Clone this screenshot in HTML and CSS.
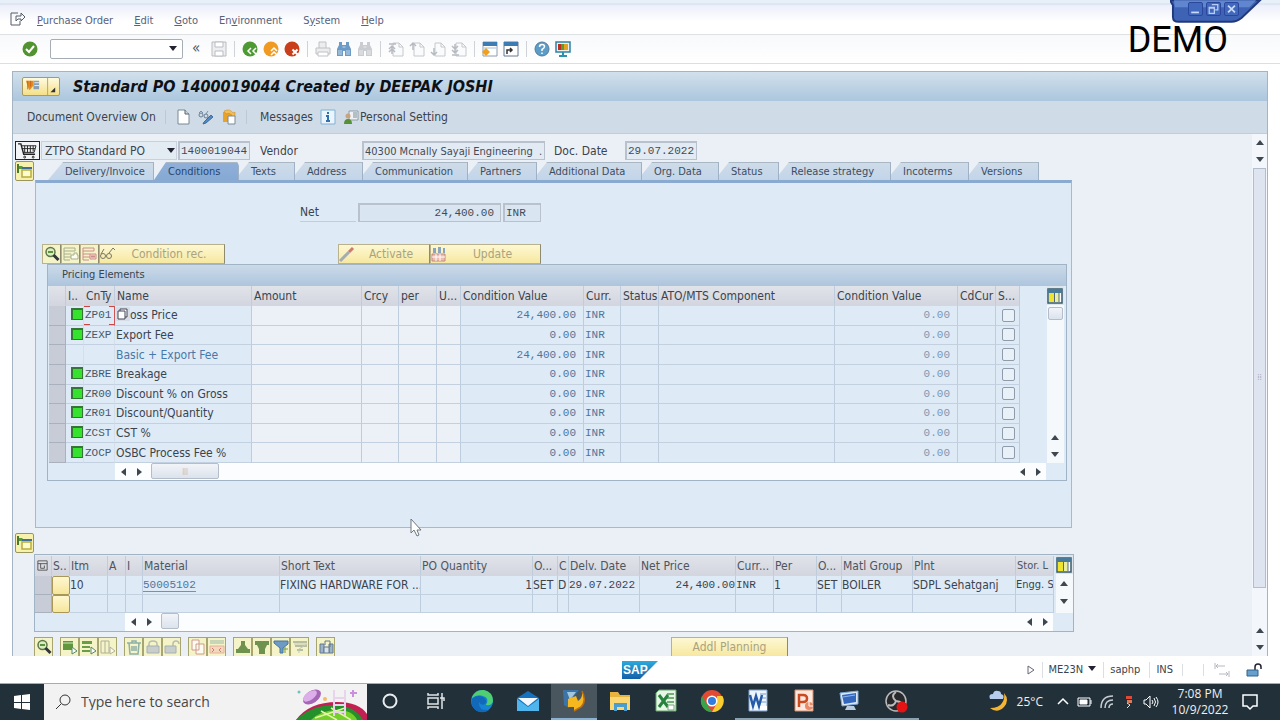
FILE: index.html
```html
<!DOCTYPE html>
<html lang="en">
<head>
<meta charset="utf-8">
<meta name="viewport" content="width=device-width, initial-scale=1">
<title>Standard PO 1400019044</title>
<link rel="stylesheet" href="styles.css">
</head>
<body>
<svg class="sprite" aria-hidden="true">
  <symbol id="binoc" viewBox="0 0 16 16"><path d="M3 1h3v3h4V1h3v3l2 4v7H9v-5H7v5H1V8l2-4z"/><path d="M3 9v5M5 9v5M11 9v5M13 9v5M6.500 6h3" stroke="#fff" stroke-opacity=".6" fill="none"/></symbol>
  <symbol id="page" viewBox="0 0 16 16"><path d="M5 2h6l4 4v9H5z" fill="#fafbfc" stroke="#c6c8cc"/><path d="M11 2v4h4" fill="none" stroke="#c6c8cc"/></symbol>
  <symbol id="tree" viewBox="0 0 16 16"><path d="M1 1v9" stroke="#4b7a2b" stroke-width="2"/><path d="M2 3h3l3 3H2z" fill="#5c9a36"/><path d="M5 5h10" stroke="#3d6f9c" stroke-width="2"/><path d="M5 7h9v7H5z" fill="#fffbd0" stroke="#b8ad3c" stroke-width="1.500"/></symbol>
  <symbol id="lens" viewBox="0 0 16 16"><circle cx="6.500" cy="6" r="4.500" fill="#d9edc0" stroke="#5f7646" stroke-width="1.500"/><path d="M4 6h5" stroke="#5d923e" stroke-width="2"/><path d="M9.500 9l5 5" stroke="#30363b" stroke-width="3"/></symbol>
  <symbol id="grid" viewBox="0 0 16 16"><path d="M1 1h14v14H1z" fill="#fff" stroke="#375b68" stroke-width="1.500"/><path d="M1 1h14v4H1z" fill="#477b99"/><path d="M2 5h5v9H2z" fill="#f0e52e"/><path d="M8 5h4v9H8z" fill="#e8efa0"/><path d="M7.500 5v9M12 5v9" stroke="#567"/></symbol>
  <symbol id="lock" viewBox="0 0 16 16"><path d="M4 7V5q0-3 4-3t4 3v2" fill="none" stroke="#a6ada9" stroke-width="1.500"/><path d="M2 7h12v7H2z" fill="#b9c2cc" stroke="#8f9ba7"/></symbol>
</svg>

<div class="session">
  <svg class="session-shape" viewBox="0 0 94 26" aria-hidden="true"><path d="M0 0h92L73 18q-5 4-10 4H9q-6 0-6-5V5z" fill="#3f63b4" stroke="#22387d" stroke-width="2"/><path d="M4 0h84l-7 7H5z" fill="#5f86cf"/></svg>
  <button aria-label="Minimize"><svg viewBox="0 0 14 14"><path d="M2 11h9" stroke="#c9dbfa" stroke-width="2"/></svg></button>
  <button aria-label="Restore"><svg viewBox="0 0 14 14"><path d="M5 2h7v6H9M2 5h6v7H2zM2 6h6" fill="none" stroke="#b7cdf5" stroke-width="1.500"/></svg></button>
  <button aria-label="Close"><svg viewBox="0 0 14 14"><path d="M3 3l8 8M11 3l-8 8" stroke="#c9dbfa" stroke-width="2"/></svg></button>
</div>
<div class="demo">DEMO</div>

<nav class="menu">
  <svg class="i16" viewBox="0 0 16 16" fill="none" stroke="#555c68"><path d="M8 2H1v12h9v-4"/><path d="M6 10V5h5V2l4 4-4 4V8H8z"/></svg>
  <a href="#"><u>P</u>urchase Order</a><a href="#"><u>E</u>dit</a><a href="#"><u>G</u>oto</a><a href="#">En<u>v</u>ironment</a><a href="#">S<u>y</u>stem</a><a href="#"><u>H</u>elp</a>
</nav>

<div class="tools">
  <button class="i16" aria-label="Enter"><svg viewBox="0 0 16 16"><circle cx="8" cy="8" r="7.500" fill="#51942f"/><path d="M4 8l3 3 5-6" fill="none" stroke="#fff" stroke-width="2"/></svg></button>
  <span class="drop command"><input type="text" aria-label="Command"></span>
  <span class="back">«</span>
  <div class="group"><button class="i16" aria-label="Save"><svg viewBox="0 0 16 16" fill="#eceef0" stroke="#b9bcc2"><path d="M1 1h14v14H1z"/><path d="M4 1h8v5H4zM4 10h8v5H4z" fill="#fff"/></svg></button></div>
  <div class="group">
    <button class="i16" aria-label="Back"><svg viewBox="0 0 16 16"><circle cx="8" cy="8" r="7.500" fill="#4d9a33"/><path d="M9 7l-3 3 3 3M14 7l-3 3 3 3" fill="none" stroke="#fff" stroke-width="1.500"/></svg></button>
    <button class="i16" aria-label="Exit"><svg viewBox="0 0 16 16"><circle cx="8" cy="8" r="7.500" fill="#f09a22"/><path d="M8 10l3-3 3 3M8 14l3-3 3 3" fill="none" stroke="#fff" stroke-width="1.500"/></svg></button>
    <button class="i16" aria-label="Cancel"><svg viewBox="0 0 16 16"><circle cx="8" cy="8" r="7.500" fill="#c93f1c"/><path d="M8.500 8.500l5 5M13.500 8.500l-5 5" stroke="#fff" stroke-width="2"/></svg></button>
  </div>
  <div class="group">
    <button class="i16" aria-label="Print"><svg viewBox="0 0 16 16" fill="#eceded" stroke="#bfc1c6"><path d="M4 7V1h7v6"/><path d="M1 7h14v6H1z"/><path d="M3 11h10v4H3z" fill="#fff"/></svg></button>
    <button class="i16 find" aria-label="Find"><svg><use href="#binoc"/></svg></button>
    <button class="i16 findnext" aria-label="Find next"><svg><use href="#binoc"/></svg></button>
  </div>
  <div class="group">
    <button class="i16" aria-label="First page"><svg viewBox="0 0 16 16"><use href="#page"/><path d="M1 3h7M4 13V5M1 8l3-3 3 3M1 11l3-3 3 3" fill="none" stroke="#b7bac0" stroke-width="1.500"/></svg></button>
    <button class="i16" aria-label="Previous page"><svg viewBox="0 0 16 16"><use href="#page"/><path d="M4 9V2M1 5l3-3 3 3" fill="none" stroke="#b7bac0" stroke-width="1.500"/></svg></button>
    <button class="i16" aria-label="Next page"><svg viewBox="0 0 16 16"><use href="#page"/><path d="M4 7v7M1 11l3 3 3-3" fill="none" stroke="#b7bac0" stroke-width="1.500"/></svg></button>
    <button class="i16" aria-label="Last page"><svg viewBox="0 0 16 16"><use href="#page"/><path d="M1 14h7M4 3v9M1 5l3 3 3-3M1 9l3 3 3-3" fill="none" stroke="#b7bac0" stroke-width="1.500"/></svg></button>
  </div>
  <div class="group">
    <button class="i16" aria-label="New session"><svg viewBox="0 0 16 16"><path d="M1 1h14v14H1z" fill="#fff" stroke="#8c9db0"/><path d="M1 1h14v4H1z" fill="#3d7bb5"/><path d="M2 7h12" stroke="#9dc0df"/><path d="M4 7l4 4-4 4-4-4z" fill="#f0a01c"/></svg></button>
    <button class="i16" aria-label="Shortcut"><svg viewBox="0 0 16 16"><path d="M1 1h14v14H1z" fill="#fff" stroke="#627c96"/><path d="M1 1h14v4H1z" fill="#3d7bb5"/><path d="M4 13V9h5M7 7l2 2-2 2" fill="none" stroke="#333" stroke-width="1.500"/></svg></button>
  </div>
  <div class="group">
    <button class="i16" aria-label="Help"><svg viewBox="0 0 16 16"><circle cx="8" cy="8" r="7" fill="#5b9cc9" stroke="#547b99"/><path d="M5.500 6q0-2.500 2.500-2.500t2.500 2q0 1.500-2.500 3V10M8 11.500v1.500" fill="none" stroke="#fff" stroke-width="1.500"/></svg></button>
    <button class="i16" aria-label="Layout"><svg viewBox="0 0 16 16"><path d="M1 1h14v10H1z" fill="#eee" stroke="#2d83a5" stroke-width="1.500"/><path d="M3 3h3v6H3z" fill="#be2d20"/><path d="M6 3h3v6H6z" fill="#5d9b2c"/><path d="M9 3h4v6H9z" fill="#e3a521"/><path d="M8 11v3M4 15h8" stroke="#2c91ad" stroke-width="2"/></svg></button>
  </div>
</div>

<main class="frame">
  <header class="titlebar">
    <button class="objbtn" aria-label="Services for object"><svg viewBox="0 0 38 18"><path d="M26 0v18" stroke="#b3a55c"/><path d="M3 3h8v5l-4 5-2-4z" fill="#e58b1e"/><path d="M5 3v9M8 3v6" stroke="#c6651a"/><path d="M11 3h6v9h-6z" fill="#87a0b4"/><path d="M12 5h5M12 8h5" stroke="#e9f1f8"/><path d="M34 10v5h-5z" fill="#333"/></svg></button>
    <h1>Standard PO 1400019044 Created by DEEPAK JOSHI</h1>
  </header>
  <div class="appbar">
    <button>Document Overview On</button><i class="bar"></i>
    <button class="i16" aria-label="Create"><svg viewBox="0 0 16 16"><path d="M3 1h7l4 4v10H3z" fill="#fff" stroke="#7b8794"/><path d="M10 1v4h4" fill="#cdd6df" stroke="#556270"/></svg></button>
    <button class="i16" aria-label="Display or change"><svg viewBox="0 0 16 16" fill="none"><path d="M1 4l2-2 2 2M8 5l2-3" stroke="#788da4"/><circle cx="3" cy="6" r="2" stroke="#667d93"/><circle cx="8" cy="7" r="2" stroke="#667d93"/><path d="M6 13l7-7 2 2-7 6-3 1z" fill="#5388c5" stroke="#426d9b"/></svg></button>
    <button class="i16" aria-label="Other purchase order"><svg viewBox="0 0 16 16"><path d="M2 3h9v10H2z" fill="#e9a229"/><path d="M3 2q6-3 9 2l2-1v5H9l2-2Q8 3 5 5z" fill="#f5bd56" stroke="#c18726" stroke-width=".5"/><path d="M7 7h7v8H7z" fill="#fff" stroke="#7a8997"/></svg></button>
    <i class="bar"></i><button>Messages</button>
    <button class="i16" aria-label="Information"><svg viewBox="0 0 16 16"><path d="M1 1h14v14H1z" fill="#eaf5fd" stroke="#7eb1d6"/><path d="M8 3v2M6 7h2v5M6 12h4" stroke="#2f70ad" stroke-width="2" fill="none"/></svg></button>
    <button class="personal"><svg class="i16" viewBox="0 0 16 16"><path d="M6 2h9v9H6z" fill="#eef2f5" stroke="#8d9ba8"/><path d="M10 4h4M10 6h4M10 8h4" stroke="#7b8a98"/><circle cx="5" cy="7" r="2.500" fill="#c9a37c"/><path d="M1 15q0-5 4-5t4 5z" fill="#569138"/></svg>Personal Setting</button>
  </div>

  <div class="workspace">
    <div class="main">
      <div class="pohead">
        <button class="cart" aria-label="Shopping cart"><svg viewBox="0 0 22 18" fill="none" stroke="#222"><path d="M1 2h3l3 11h12" stroke-width="1.500"/><path d="M5 4h15l-2 7H7M8 4v7M11 4v7M14 4v7M17 4v6M5 7h14"/><circle cx="8" cy="16" r="1"/><circle cx="17" cy="16" r="1"/></svg></button>
        <span class="drop ordertype"><select aria-label="Order type"><option>ZTPO Standard PO</option></select></span>
        <input class="field mono w-num" aria-label="Order number" value="1400019044" readonly>
        <label class="vendorlabel" for="vendor">Vendor</label>
        <input class="field w-vendor" id="vendor" value="40300 Mcnally Sayaji Engineering  ." readonly>
        <label class="datelabel" for="docdate">Doc. Date</label>
        <input class="field mono w-date" id="docdate" value="29.07.2022" readonly>
      </div>

      <section class="detail">
        <button class="toggle" aria-label="Collapse header"><svg><use href="#tree"/></svg></button>
        <div class="detailbody">
          <div class="tabs" role="tablist">
            <button role="tab">Delivery/Invoice</button><button role="tab" aria-selected="true">Conditions</button><button role="tab">Texts</button><button role="tab">Address</button><button role="tab">Communication</button><button role="tab">Partners</button><button role="tab">Additional Data</button><button role="tab">Org. Data</button><button role="tab">Status</button><button role="tab">Release strategy</button><button role="tab">Incoterms</button><button role="tab">Versions</button>
          </div>
          <div class="panel">
            <div class="net">
              <label for="net">Net</label>
              <input class="field mono w-net" id="net" value="24,400.00" readonly>
              <input class="field mono w-cur" aria-label="Currency" value="INR" readonly>
            </div>
            <div class="actions">
              <button class="ybtn sq" aria-label="Details"><svg><use href="#lens"/></svg></button>
              <button class="ybtn sq dim" aria-label="Insert row"><svg viewBox="0 0 16 16" fill="none" stroke="#8d9a78"><path d="M1 2h11v3H1zM1 8h7M1 11h7M1 5v9h6"/><path d="M8 9h3V7h3v2h1v4h-7z" fill="#fff"/></svg></button>
              <button class="ybtn sq dim" aria-label="Delete row"><svg viewBox="0 0 16 16" fill="none" stroke="#c06d74"><path d="M1 2h11v3H1zM1 8h7M1 11h7M1 5v9h6"/><path d="M8 8h6v5H8z" fill="#fbd4d2"/><path d="M9 10.500h4" stroke-width="2"/></svg></button>
              <button class="ybtn w-rec"><svg class="i16" viewBox="0 0 16 16" fill="none" stroke="#77776a"><circle cx="3" cy="10" r="2.500"/><circle cx="9" cy="10" r="2.500"/><path d="M1 8l3-5M9 7l4-5 2 2"/></svg><span>Condition rec.</span></button>
              <button class="ybtn w-act"><svg class="i16" viewBox="0 0 16 16"><path d="M1 15l9-9" stroke="#a3acb4" stroke-width="3"/><path d="M10 6l4-4" stroke="#cf7a70" stroke-width="3"/></svg><span>Activate</span></button>
              <button class="ybtn w-upd"><svg class="i16" viewBox="0 0 16 16"><path d="M2 2h3v5H2zM7 1h3v6H7zM12 2h2v5h-2z" fill="#89a5bc"/><path d="M1 8h13v7H1z" fill="#efbcae" stroke="#c48a80"/><path d="M5 8v7M9 8v7M1 11h13" stroke="#fff"/></svg><span>Update</span></button>
            </div>

            <div class="tablebox">
              <h2>Pricing Elements</h2>
              <div class="tablerow">
                <table class="pricing">
                  <colgroup><col class="c17"><col class="c18"><col class="c31"><col class="c137"><col class="c110"><col class="c37"><col class="c38"><col class="c24"><col class="c123"><col class="c37"><col class="c38"><col class="c176"><col class="c123"><col class="c38"><col class="c24"></colgroup>
                  <thead><tr><th></th><th>I..</th><th>CnTy</th><th>Name</th><th>Amount</th><th>Crcy</th><th>per</th><th>U...</th><th>Condition Value</th><th>Curr.</th><th>Status</th><th>ATO/MTS Component</th><th>Condition Value</th><th>CdCur</th><th>S...</th></tr></thead>
                  <tbody>
                    <tr><td></td><td><i class="led"></i></td><td class="focus">ZP01</td><td><span class="f4"><svg viewBox="0 0 14 14" aria-hidden="true"><path d="M2 4h7v8H2zM4 4V2h7v8H9" fill="#fff" stroke="#445"/></svg></span>oss Price</td><td></td><td></td><td></td><td></td><td>24,400.00</td><td>INR</td><td></td><td></td><td>0.00</td><td></td><td><input type="checkbox" aria-label="Statistical ZP01"></td></tr>
                    <tr><td></td><td><i class="led"></i></td><td>ZEXP</td><td>Export Fee</td><td></td><td></td><td></td><td></td><td>0.00</td><td>INR</td><td></td><td></td><td>0.00</td><td></td><td><input type="checkbox" aria-label="Statistical ZEXP"></td></tr>
                    <tr><td></td><td></td><td></td><td class="sub">Basic + Export Fee</td><td></td><td></td><td></td><td></td><td>24,400.00</td><td>INR</td><td></td><td></td><td>0.00</td><td></td><td><input type="checkbox" aria-label="Statistical subtotal"></td></tr>
                    <tr><td></td><td><i class="led"></i></td><td>ZBRE</td><td>Breakage</td><td></td><td></td><td></td><td></td><td>0.00</td><td>INR</td><td></td><td></td><td>0.00</td><td></td><td><input type="checkbox" aria-label="Statistical ZBRE"></td></tr>
                    <tr><td></td><td><i class="led"></i></td><td>ZR00</td><td>Discount % on Gross</td><td></td><td></td><td></td><td></td><td>0.00</td><td>INR</td><td></td><td></td><td>0.00</td><td></td><td><input type="checkbox" aria-label="Statistical ZR00"></td></tr>
                    <tr><td></td><td><i class="led"></i></td><td>ZR01</td><td>Discount/Quantity</td><td></td><td></td><td></td><td></td><td>0.00</td><td>INR</td><td></td><td></td><td>0.00</td><td></td><td><input type="checkbox" aria-label="Statistical ZR01"></td></tr>
                    <tr><td></td><td><i class="led"></i></td><td>ZCST</td><td>CST %</td><td></td><td></td><td></td><td></td><td>0.00</td><td>INR</td><td></td><td></td><td>0.00</td><td></td><td><input type="checkbox" aria-label="Statistical ZCST"></td></tr>
                    <tr><td></td><td><i class="led"></i></td><td>ZOCP</td><td>OSBC Process Fee %</td><td></td><td></td><td></td><td></td><td>0.00</td><td>INR</td><td></td><td></td><td>0.00</td><td></td><td><input type="checkbox" aria-label="Statistical ZOCP"></td></tr>
                  </tbody>
                </table>
                <div class="vscroll">
                  <button class="cfg" aria-label="Table settings"><svg><use href="#grid"/></svg></button>
                  <div class="vtrack"><i class="vthumb"></i></div>
                  <button class="arr up" aria-label="Up"></button><button class="arr down" aria-label="Down"></button>
                </div>
              </div>
              <div class="hscroll h-pricing">
                <button class="arr left" aria-label="Left"></button><button class="arr right" aria-label="Right"></button>
                <div class="htrack"><i class="hthumb wide">|||</i></div>
                <button class="arr left" aria-label="Left"></button><button class="arr right" aria-label="Right"></button>
              </div>
            </div>
          </div>
        </div>
      </section>

      <section class="overview">
        <button class="toggle" aria-label="Expand items"><svg><use href="#tree"/></svg></button>
        <div class="itembox">
          <div class="tablerow">
            <table class="items">
              <colgroup><col class="c17"><col class="c18"><col class="c38"><col class="c18"><col class="c17"><col class="c137"><col class="c141"><col class="c112"><col class="c25"><col class="c11"><col class="c71"><col class="c96"><col class="c38"><col class="c43"><col class="c25"><col class="c71"><col class="c103"><col></colgroup>
              <thead><tr><th><svg class="sel" viewBox="0 0 14 14" fill="none" stroke="#555"><path d="M2 2h10v10H2zM2 5h10M5 5v5h4V7"/></svg></th><th>S..</th><th>Itm</th><th>A</th><th>I</th><th>Material</th><th>Short Text</th><th>PO Quantity</th><th>O...</th><th>C</th><th>Delv. Date</th><th>Net Price</th><th>Curr...</th><th>Per</th><th>O...</th><th>Matl Group</th><th>Plnt</th><th>Stor. L</th></tr></thead>
              <tbody>
                <tr><td></td><td></td><td>10</td><td></td><td></td><td class="mono"><a href="#">50005102</a></td><td>FIXING HARDWARE FOR ...</td><td class="num">1</td><td>SET</td><td>D</td><td class="mono">29.07.2022</td><td class="mono num">24,400.00</td><td class="mono">INR</td><td>1</td><td>SET</td><td>BOILER</td><td>SDPL Sehatganj</td><td class="tight">Engg. S</td></tr>
                <tr><td></td><td></td><td></td><td></td><td></td><td></td><td></td><td></td><td></td><td></td><td></td><td></td><td></td><td></td><td></td><td></td><td></td><td></td></tr>
              </tbody>
            </table>
            <div class="vscroll">
              <button class="cfg" aria-label="Table settings"><svg><use href="#grid"/></svg></button>
              <button class="arr up" aria-label="Up"></button><button class="arr down" aria-label="Down"></button>
            </div>
          </div>
          <div class="hscroll h-items">
            <button class="arr left" aria-label="Left"></button><button class="arr right" aria-label="Right"></button>
            <div class="htrack"><i class="hthumb"></i></div>
            <button class="arr left" aria-label="Left"></button><button class="arr right" aria-label="Right"></button>
          </div>
        </div>
        <div class="itemtools">
          <div><button class="ybtn sq" aria-label="Item details"><svg><use href="#lens"/></svg></button></div>
          <div>
            <button class="ybtn sq" aria-label="Select all"><svg viewBox="0 0 16 16"><path d="M1 2h10v9H1z" fill="#5f963e"/><path d="M1 4h10" stroke="#d4e8bf"/><path d="M10 8l5 4-5 3z" fill="#fff" stroke="#586"/></svg></button>
            <button class="ybtn sq" aria-label="Select block"><svg viewBox="0 0 16 16"><path d="M1 2h10v3H1zM1 7h8v2H1zM1 11h8v2H1z" fill="#6a9d48"/><path d="M10 8l5 4-5 3z" fill="#fff" stroke="#586"/></svg></button>
            <button class="ybtn sq dim" aria-label="Deselect all"><svg viewBox="0 0 16 16" fill="none" stroke="#9b9b88"><path d="M1 2h8v12H1zM5 2v12"/><path d="M10 8l5 4-5 3z" fill="#fff"/></svg></button>
          </div>
          <div>
            <button class="ybtn sq dim" aria-label="Delete"><svg viewBox="0 0 16 16" fill="none" stroke="#6b9a9d" stroke-width="1.500"><path d="M1 4h14M6 4V2h4v2M3 4l1 11h8l1-11M6 7v5M8 7v5M10 7v5"/></svg></button>
            <button class="ybtn sq dim" aria-label="Lock"><svg><use href="#lock"/></svg></button>
            <button class="ybtn sq dim" aria-label="Unlock"><svg viewBox="0 0 16 16"><path d="M9 7V5q0-3 3-3t3 3" fill="none" stroke="#a6ada9" stroke-width="1.500"/><path d="M1 7h11v7H1z" fill="#b9c2cc" stroke="#8f9ba7"/></svg></button>
          </div>
          <div>
            <button class="ybtn sq dim" aria-label="Copy"><svg viewBox="0 0 16 16" fill="#fff" stroke="#c47e79"><path d="M2 1h7v10H2zM6 5h8v10H6z"/></svg></button>
            <button class="ybtn sq dim" aria-label="Schedule"><svg viewBox="0 0 16 16"><path d="M1 1h14v4H1z" fill="#b9cbb0"/><path d="M1 7h14v7H1z" fill="#f5cdbd" stroke="#dc9f88"/><path d="M3 9l2 2-2 2M12 9l-2 2 2 2" stroke="#c55a45" fill="none"/></svg></button>
          </div>
          <div>
            <button class="ybtn sq" aria-label="Sort ascending"><svg viewBox="0 0 16 16" fill="#6f934f"><path d="M6 2h4v4l3 4h2v4H1v-4h2l3-4z"/></svg></button>
            <button class="ybtn sq" aria-label="Sort descending"><svg viewBox="0 0 16 16" fill="#6f934f"><path d="M1 2h14v4h-2l-2 4v5H5v-5L3 6H1z"/></svg></button>
            <button class="ybtn sq" aria-label="Filter"><svg viewBox="0 0 16 16"><path d="M1 2h14v3l-5 4v5H7V9L1 4z" fill="#6d9bc4" stroke="#48749e"/><path d="M10 10h5M12 8v6" stroke="#779b4d"/></svg></button>
            <button class="ybtn sq dim" aria-label="Delete filter"><svg viewBox="0 0 16 16"><path d="M1 3h14M3 7h12M5 11h6" stroke="#a4ad96" stroke-width="2"/><path d="M2 5h13l-8 5v4" fill="none" stroke="#b3b9aa"/></svg></button>
          </div>
          <div><button class="ybtn sq" aria-label="Calculate"><svg viewBox="0 0 16 16"><path d="M2 5h4v9H2zM11 5h4v9h-4z" fill="#9db3c7" stroke="#62798f"/><path d="M6 8h5v6H6z" fill="#d9e3ea" stroke="#62798f"/><path d="M7 6V2h5v6" fill="none" stroke="#62798f"/></svg></button></div>
          <button class="ybtn planning">Addl Planning</button>
        </div>
      </section>
    </div>

    <div class="pagescroll">
      <button class="arr up" aria-label="Scroll up"></button><button class="arr down" aria-label="Scroll down"></button>
      <div class="pagethumb">⁞⁞</div>
      <div class="pagetrack"></div>
      <button class="arr up" aria-label="Scroll up"></button><button class="arr down" aria-label="Scroll down"></button>
    </div>
  </div>
</main>

<svg class="cursor" viewBox="0 0 12 19" aria-hidden="true"><path d="M1 1v14l3-3 3 6 2-1-2-5h4z" fill="#fff" stroke="#6d7783"/></svg>

<footer class="status">
  <span></span>
  <svg class="sap" viewBox="0 0 36 18" role="img" aria-label="SAP"><defs><linearGradient id="sg" x2="0" y2="1"><stop stop-color="#2cabdc"/><stop offset="1" stop-color="#1460a8"/></linearGradient></defs><path d="M0 0h36L18 18H0z" fill="url(#sg)"/><text x="1" y="13" class="saptext">SAP</text></svg>
  <div class="info">
    <svg class="play" viewBox="0 0 10 12"><path d="M2 2l6 4-6 4z" fill="#fff" stroke="#667"/></svg>
    <span class="tx">ME23N <b class="tri"></b></span><span>saphp</span><span>INS</span><span class="blank"></span>
    <svg class="i16 tabicon" viewBox="0 0 16 16" fill="none" stroke="#b5b8bf"><path d="M1 1v6M2 4h9M4 2L2 4l2 2M15 9v6M5 12h9M12 10l2 2-2 2"/></svg>
    <svg class="i16" viewBox="0 0 16 16"><path d="M9 8V5q0-3 3-3t3 3v2" fill="none" stroke="#223" stroke-width="1.500"/><path d="M1 8h11v6H1z" fill="#67a0cc" stroke="#2f628c"/></svg>
  </div>
</footer>

<div class="taskbar">
  <button class="start" aria-label="Start"><svg viewBox="0 0 16 16" fill="#fff"><path d="M0 2l7-1v7H0zM8 1l8-1v8H8zM0 9h7v6l-7-1zM8 9h8v7l-8-1z"/></svg></button>
  <label class="search"><svg class="i16" viewBox="0 0 16 16" fill="none" stroke="#333"><circle cx="10" cy="6" r="5"/><path d="M6 10l-5 5"/></svg><input type="text" placeholder="Type here to search">
    <svg class="doodle" viewBox="0 0 72 32"><path d="M1 32Q14 14 42 14 64 14 72 26v6z" fill="#c21f52"/><path d="M1 32Q16 17 40 17 60 18 68 32z" fill="#24902b"/><path d="M16 32q10-10 26-10t20 10z" fill="#74cf28"/><path d="M26 23l16 9M36 20l20 12M20 30l30-10" stroke="#e5f5a8" stroke-width="1.500"/><path d="M39 2v26M50 2v26M39 10h11M39 17h11M39 24h11" stroke="#e9d4ee" stroke-width="2" fill="none"/><ellipse cx="17" cy="9" rx="10" ry="6" transform="rotate(-35 17 9)" fill="#a566b5"/><ellipse cx="15" cy="8" rx="8" ry="4" transform="rotate(-35 15 8)" fill="#dcaeea"/><circle cx="4" cy="4" r="1.500" fill="#68c6bf"/><circle cx="30" cy="11" r="2" fill="#f5b96a"/><path d="M58 2v7M55 5h7" stroke="#c891dc" stroke-width="2"/></svg>
  </label>
  <div class="apps">
    <button aria-label="Cortana"><svg viewBox="0 0 24 24"><circle cx="12" cy="12" r="6.500" fill="none" stroke="#e8ecee" stroke-width="2"/></svg></button>
    <button aria-label="Task view"><svg viewBox="0 0 24 24" fill="none" stroke="#e0e5e8" stroke-width="1.500"><path d="M4 9h10v6H4zM4 4v2h10V4M4 20v-2h10v2M18 4v16M16 9h4v3"/></svg></button>
    <button aria-label="Edge"><svg viewBox="0 0 24 24"><circle cx="12" cy="12" r="11" fill="#1683d3"/><path d="M2 8Q6 0 14 1q9 2 9 11-1 5-7 4 4-7-3-9Q7 5 2 9z" fill="#4fcf72"/><path d="M2 10Q7 5 13 8q5 3 2 7-4 2-6-2-1 9 10 8-5 4-12 1Q0 17 2 10z" fill="#1268b9"/></svg></button>
    <button aria-label="Mail"><svg viewBox="0 0 24 24"><path d="M1 9l11-7 11 7v13H1z" fill="#1672be"/><path d="M2 9h20l-10 8z" fill="#f2f8fc"/><path d="M1 10l11 8 11-8v12H1z" fill="#50b5ed"/></svg></button>
    <button class="active" aria-label="SAP Logon"><svg viewBox="0 0 24 24"><path d="M1 1h16l-5 6-5 12-5-3z" fill="#3b75a8"/><path d="M5 3h9l-6 8z" fill="#a4c6dc"/><path d="M6 10l8-3 2 5q5-3 4-10 5 10-1 16l-7 4v-4H6z" fill="#f6b81e"/><path d="M20 2q5 10-1 16l-7 4" fill="none" stroke="#bd6a15" stroke-width="1.500"/></svg></button>
    <button aria-label="File Explorer"><svg viewBox="0 0 24 24"><path d="M2 3h8l2 3h10v15H2z" fill="#e8b43d"/><path d="M2 8h20v13H2z" fill="#fad772"/><path d="M6 14h13v8h-3v-4H9v4H6z" fill="#4a9dcc"/></svg></button>
    <button aria-label="Excel"><svg viewBox="0 0 24 24"><path d="M5 1h17v21H2V4z" fill="#e7f4e6" stroke="#64a96c"/><path d="M13 5h7M13 9h7M13 13h7" stroke="#74ae77" stroke-width="2"/><path d="M5 6l9 12M14 6L5 18" stroke="#25833e" stroke-width="3"/><path d="M14 16h6v5h-6z" fill="#fff" stroke="#77a57b"/></svg></button>
    <button aria-label="Chrome"><svg viewBox="0 0 24 24"><circle cx="12" cy="12" r="11" fill="#e24a34"/><path d="M2 7l6 10 4 6A11 11 0 012 7z" fill="#37a34a"/><path d="M12 23l5-9V7h5.500A11 11 0 0112 23z" fill="#f7cd2f"/><circle cx="12" cy="12" r="5.500" fill="#fff"/><circle cx="12" cy="12" r="4" fill="#347de0"/></svg></button>
    <button class="open" aria-label="Word"><svg viewBox="0 0 24 24"><path d="M3 1h18v21H3z" fill="#eef4fb" stroke="#7da2cf"/><path d="M14 5h6M14 9h6M14 13h6" stroke="#779acb"/><path d="M4 6l3 11 3-10 3 10 3-11" fill="none" stroke="#245aa8" stroke-width="2.500"/><path d="M14 17h7v4h-7z" fill="#fff"/></svg></button>
    <button class="open" aria-label="PowerPoint"><svg viewBox="0 0 24 24"><path d="M3 1h18v21H3z" fill="#fbe9df" stroke="#d98c69"/><path d="M7 18V6h4q4 0 4 3.500T11 13H7" fill="none" stroke="#cc4a20" stroke-width="2.500"/><circle cx="17" cy="17" r="4" fill="#e78b68"/><path d="M17 13v4h4" stroke="#fff" fill="none"/></svg></button>
    <button class="open" aria-label="Remote session"><svg viewBox="0 0 24 24"><path d="M2 4l18-2v13L4 17z" fill="#dbe8f7" stroke="#7fa6d2"/><path d="M4 6l14-2v9L6 15z" fill="#3466bd"/><path d="M5 8l12-2" stroke="#8eb5ed"/><path d="M9 17h7l2 4H7z" fill="#b9cbe0"/></svg></button>
    <button class="open" aria-label="Recorder"><svg viewBox="0 0 24 24"><circle cx="12" cy="12" r="10" fill="#28292d" stroke="#bbb" stroke-width="1.500"/><path d="M12 3q-6 4 0 9 7 1 8 6M12 12q-2 6-8 4" fill="none" stroke="#bbb" stroke-width="2"/><circle cx="18" cy="18" r="5.500" fill="#e51313"/></svg></button>
  </div>
  <div class="tray">
    <svg class="moon" viewBox="0 0 24 24"><path d="M17 3q6 7 0 14-7 7-14 1 9 0 12-5 3-4 2-10z" fill="#f5b432"/><path d="M3 9Q1 4 6 4q1-4 5-3 3 0 3 3 4 1 2 5z" fill="#b7cdee"/></svg>
    <span class="temp">25°C</span>
    <svg class="i16" viewBox="0 0 16 16" fill="none" stroke="#fff" stroke-width="1.500"><path d="M3 10l5-5 5 5"/></svg>
    <svg class="i16" viewBox="0 0 16 16" fill="none" stroke="#fff"><path d="M1 4h12v8H1zM14 6v4"/><path d="M3 6h7v4H3z" fill="#fff"/></svg>
    <svg class="i16" viewBox="0 0 16 16" fill="none" stroke="#c7cdd1" stroke-width="1.500"><path d="M2 14Q2 2 14 2M6 14q0-8 8-8M10 14q0-4 4-4"/></svg>
    <svg class="i16" viewBox="0 0 16 16"><path d="M5 2h6v3H5z" fill="#dc4b35"/><path d="M6 6h5v3H6z" fill="#dc7b5a"/><path d="M6 9l3 2-3 3" stroke="#e6e6e6" fill="none"/></svg>
    <svg class="i16" viewBox="0 0 16 16" fill="none" stroke="#fff"><path d="M1 6h2l4-4v12l-4-4H1zM9 6q2 2 0 4M11 4q3 4 0 8M13 3q4 5 0 10"/></svg>
    <div class="clock">7:08 PM<br>10/9/2022</div>
    <svg class="note" viewBox="0 0 18 18" fill="none" stroke="#fff" stroke-width="1.500"><path d="M2 2h14v11h-4l-3 3-3-3H2z"/></svg>
  </div>
</div>
</body>
</html>
```
FILE: styles.css
```css
* { box-sizing: border-box; }
body {
  margin: 0; min-height: 100vh; display: flex; flex-direction: column;
  background: #fff; color: #3b434d; position: relative;
  font: 12px/16px "DejaVu Sans Condensed", "Noto Sans", sans-serif;
}
button, input, select { font: inherit; color: inherit; margin: 0; padding: 0; border: 0; background: none; }
button svg { display: block; width: 16px; height: 16px; }
a { color: inherit; text-decoration: none; }
.sprite { position: absolute; width: 0; height: 0; }
.i16 { width: 16px; height: 16px; flex: none; }
.mono { font-family: "Liberation Mono", monospace; font-size: 11px; }

/* window chrome */
.session { position: absolute; top: 0; right: 18px; width: 92px; height: 24px; display: flex; gap: 3px; padding: 2px 0 0 18px; }
.session-shape { position: absolute; left: 0; top: 0; width: 92px; height: 26px; }
.session button { position: relative; width: 15px; height: 14px; border: 1px solid #2a479c; border-radius: 2px; background: #4168bd; }
.session button svg { width: 13px; height: 12px; }
.demo { position: absolute; top: 18px; right: 52px; font: 36px/44px Roboto, sans-serif; color: #000; }

.menu {
  height: 35px; padding: 7px 0 0 10px; display: flex; align-items: center; gap: 21px; color: #56617c; font-size: 11px;
  background: linear-gradient(#e7eff9 0 3px, #d3ddea 4px, #eceffa 5px, #fff 22px); border-bottom: 1px solid #dfe2e5;
}
.menu .i16 { margin: -4px -10px 0 0; }
.tools { height: 29px; display: flex; align-items: center; padding-left: 22px; background: linear-gradient(#f8f9fb, #fff); border-bottom: 1px solid #dcdfe2; }
.drop { position: relative; display: flex; }
.drop::after { content: ""; position: absolute; right: 6px; top: 7px; border: 4px solid transparent; border-top: 5px solid #223; border-bottom: 0; pointer-events: none; }
.command { width: 133px; height: 20px; margin-left: 12px; }
.command input { width: 100%; padding: 0 4px; background: #fff; border: 1px solid #a7adb4; border-radius: 2px; }
.back { width: 28px; padding: 0 0 3px 9px; font-size: 15px; color: #4e5560; }
.group { display: flex; gap: 5px; }
.group + .group { margin-left: 7px; padding-left: 7px; border-left: 1px solid #cfd2d6; }
.find { fill: #6b9bc7; }
.findnext { fill: #c9ccd1; }

/* work area */
.frame { flex: 1; margin: 7px 12px 0; display: flex; flex-direction: column; border: 1px solid #a5b4c2; border-bottom: 0; background: #ebf0f6; overflow: hidden; }
.titlebar { height: 29px; display: flex; align-items: center; gap: 13px; padding-left: 9px; background: linear-gradient(#d2e0ec, #abc6dd); }
.objbtn { width: 38px; height: 19px; border: 1px solid #a79a63; border-radius: 2px; background: linear-gradient(#fffbe0, #f5df86); overflow: hidden; }
.objbtn svg { width: 36px; height: 17px; }
h1 { margin: 0; font: italic bold 16px/20px "DejaVu Sans Condensed", "Noto Sans", sans-serif; color: #0d1117; white-space: nowrap; }
.appbar { height: 33px; display: flex; align-items: center; gap: 7px; padding-left: 14px; background: #cfdce8; border-bottom: 1px solid #c0ced9; }
.bar { width: 1px; height: 14px; background: #bccad6; margin: 0 2px; }
.appbar .bar + button:not(.i16) { margin-left: 4px; }
.personal { display: flex; align-items: center; gap: 1px; }

.workspace { flex: 1; display: flex; min-height: 0; }
.main { flex: 1; min-width: 0; padding-top: 7px; }
.pohead { display: flex; align-items: center; height: 19px; padding-left: 2px; white-space: nowrap; }
.cart { width: 25px; height: 19px; border: 1px solid #222; background: #f2f4f5; }
.cart svg { width: 23px; height: 17px; }
.ordertype { width: 136px; height: 19px; margin: 0 1px; }
.ordertype::after { right: 2px; }
.ordertype select { width: 100%; padding: 0 3px; appearance: none; border: 1px solid #c9d1da; background: #e3ebf3; }
.field { height: 19px; padding: 0 1px; border: 2px solid #b8c1cc; border-width: 2px 1px 1px 2px; background: #e2eaf3; color: #444b55; }
.w-num { width: 72px; }
.vendorlabel { margin-left: 10px; width: 102px; }
.w-vendor { width: 183px; font-size: 11px; }
.datelabel { margin-left: 9px; width: 71px; }
.w-date { width: 72px; }

.detail { display: grid; grid-template-columns: 19px minmax(0, 1037px); gap: 1px; padding-left: 2px; margin-top: 1px; }
.detailbody { padding-top: 1px; }
.toggle { display: block; width: 19px; height: 20px; padding: 1px; border: 1px solid #9a975c; background: #f7f1ad; border-radius: 2px; }
.tabs { display: grid; grid-template-columns: 106px 85px 56px 68px 105px 69px 105px 77px 60px 112px 78px 70px; padding-left: 13px; }
.tabs button {
  height: 18px; padding-left: 12px; text-align: left; white-space: nowrap; color: #3c4d61; font-size: 11px;
  background: linear-gradient(#cfdbe8, #c1d5ea); border-top: 1px solid #a9b6c4; border-right: 1px solid #a0b1c3;
  clip-path: polygon(10px 0, 100% 0, 100% 100%, 0 100%, 0 70%);
}
.tabs button:first-child { padding-left: 17px; clip-path: polygon(15px 0, 100% 0, 100% 100%, 0 100%); }
.tabs button[aria-selected="true"] { padding-left: 14px; background: linear-gradient(#8fafd8, #85a9d5); clip-path: polygon(12px 0, 98% 0, 100% 20%, 100% 100%, 0 100%); color: #26466c; }
.panel { border: 1px solid #a7b9cc; border-top: 3px solid #8aabcf; background: #deeaf6; padding: 20px 4px 46px 6px; }
.net { display: flex; gap: 2px; padding-left: 258px; }
.net label { width: 56px; border-bottom: 1px solid #c0ced9; line-height: 18px; }
.w-net { width: 143px; text-align: right; padding-right: 6px; }
.w-cur { width: 38px; }
.net .field { background: #d9e6f1; }
.actions { display: flex; margin-top: 22px; }
.ybtn { height: 20px; display: flex; align-items: center; border: 1px solid #b9b28c; border-right-color: #8e8a70; background: linear-gradient(#fdf8d3, #f7e8a0); color: #a9a37f; overflow: hidden; }
.ybtn span { flex: 1; text-align: center; padding-right: 2px; white-space: nowrap; }
.sq { width: 19px; justify-content: center; background: #f5f3c8; flex: none; }
.dim svg { opacity: .75; }
.w-rec { width: 126px; margin-right: 113px; }
.w-act { width: 92px; }
.w-upd { width: 111px; }

.tablebox, .itembox { border: 1px solid #a1b4c6; background: #deeaf6; }
.tablebox { margin-left: 5px; }
h2 { margin: 0; height: 21px; padding-left: 14px; font: 11px/19px "DejaVu Sans Condensed", "Noto Sans", sans-serif; background: linear-gradient(#cbdae8, #adc5dd); }
.tablerow { display: flex; justify-content: space-between; }
table { table-layout: fixed; border-collapse: separate; border-spacing: 0; flex: none; }
th, td { padding: 0 1px; line-height: 16px; overflow: hidden; white-space: nowrap; text-align: left; font-weight: normal; border-right: 1px solid #becddd; border-bottom: 1px solid #c2d0df; }
th { height: 20px; padding-left: 2px; background: linear-gradient(#e0e3e9, #d3d6df); border-bottom-color: #d3d6df; }
.pricing { width: 971px; height: 177px; margin-left: 1px; }
.tablebox .tablerow { padding-right: 2px; }
.pricing td:first-child, .items td:first-child { background: #c8ccd7; border-color: #a9b1be; }
.pricing td:nth-child(n+5):nth-child(-n+8) { background: #ebf1f7; }
.pricing td:nth-child(3), .pricing td:nth-child(9), .pricing td:nth-child(10), .pricing td:nth-child(13) { font-family: "Liberation Mono", monospace; font-size: 11px; color: #50759b; }
.pricing td:nth-child(3) { color: #485869; }
.pricing td:nth-child(9), .pricing td:nth-child(13) { text-align: right; padding-right: 7px; }
.pricing td:nth-child(13) { color: #7e97b2; }
.pricing td:nth-child(3), .pricing td:nth-child(2), .pricing th:nth-child(2) { border-right-color: #d3e0ec; }
.pricing td.focus { background: linear-gradient(90deg, #c44 6px, transparent 0 25px, #c44 0) 0 0 / 100% 1px no-repeat, linear-gradient(90deg, #c44 6px, transparent 0 25px, #c44 0) 0 100% / 100% 1px no-repeat; border-right-color: #c55; }
.pricing input { display: block; width: 13px; height: 13px; margin-left: 5px; appearance: none; border: 1px solid #8f9baa; border-radius: 2px; background: #e8f0f8; }
.pricing td.sub { color: #4878a8; }
.led { display: block; width: 12px; height: 12px; margin: -2px 0 0 4px; background: #35e22e; border: 1px solid #377437; border-width: 2px 1px 1px 2px; }
.f4 { display: inline-block; width: 14px; height: 14px; vertical-align: -2px; background: #d6dde6; }
.f4 svg { display: block; width: 14px; height: 14px; }
.c11 { width: 11px; } .c17 { width: 17px; } .c18 { width: 18px; } .c24 { width: 24px; } .c25 { width: 25px; }
.c31 { width: 31px; } .c37 { width: 37px; } .c38 { width: 38px; } .c43 { width: 43px; } .c71 { width: 71px; }
.c96 { width: 96px; } .c103 { width: 103px; } .c110 { width: 110px; } .c112 { width: 112px; }
.c123 { width: 123px; } .c137 { width: 137px; } .c141 { width: 141px; } .c176 { width: 176px; }

.vscroll { width: 17px; display: flex; flex-direction: column; background: #f6f9fc; }
.cfg { height: 19px; padding: 1px 0; background: #dfe5ec; }
.vtrack { flex: 1; padding: 2px 1px; }
.vthumb, .hthumb { display: block; border: 1px solid #b4bdc9; border-radius: 2px; background: linear-gradient(#f1f4f9, #dce3ec); }
.vthumb { height: 13px; }
.arr { width: 16px; height: 17px; display: grid; place-items: center; flex: none; }
.arr::before { content: ""; border: 4px solid transparent; }
.up::before { border-bottom: 5px solid #3e4650; border-top: 0; }
.down::before { border-top: 5px solid #3e4650; border-bottom: 0; }
.left::before { border-right: 5px solid #3e4650; border-left: 0; }
.right::before { border-left: 5px solid #3e4650; border-right: 0; }
.hscroll { height: 17px; display: flex; background: #fcfdfe; }
.htrack { flex: 1; padding: 0 4px; }
.hthumb { width: 18px; height: 16px; font: 7px/14px "Liberation Sans", sans-serif; text-align: center; color: #adb5c0; }
.hthumb.wide { width: 68px; }
.h-pricing { margin: 0 20px 0 67px; }

.overview { padding: 5px 0 0 2px; }
.itembox { max-width: 1040px; margin: 1px 0 0 19px; }
.items { width: 1019px; margin-top: 1px; }
.items td { height: 19px; padding: 0; }
.items tr:last-child td { height: 18px; }
.items th { color: #4d5560; padding: 0 0 0 1px; }
.items td:nth-child(2) { background: linear-gradient(#fff7cf, #f5e69b); border: 1px solid #a9975a; border-radius: 2px; }
.items td a { border-bottom: 1px solid #7890a8; color: #50759b; }
.items td.num { text-align: right; }
.items td.tight { font-size: 11px; }
.items th:last-child { font-size: 11px; }
.sel { display: block; width: 13px; height: 13px; }
.itembox .arr { height: 18px; }
.h-items { height: 18px; margin: 0 20px 0 90px; }
.itemtools { display: flex; gap: 7px; margin: 5px 0 0 19px; height: 19px; }
.itemtools div { display: flex; }
.itemtools .sq { border-color: #a7a570; }
.planning { width: 117px; justify-content: center; margin-left: 329px; }

.pagescroll { width: 15px; display: flex; flex-direction: column; align-items: center; background: #f3f6fa; }
.pagethumb { width: 13px; height: 420px; display: grid; place-items: center; border: 1px solid #b3becd; background: #dfe5f0; color: #9faab8; font-size: 8px; }
.pagetrack { flex: 1; }
.cursor { position: absolute; left: 410px; top: 518px; width: 12px; height: 19px; }

/* status line */
.status { height: 28px; display: grid; grid-template-columns: 1fr 36px 1fr; align-items: center; border-bottom: 1px solid #a6abb0; }
.sap { width: 36px; height: 18px; }
.saptext { font: bold 12px "Liberation Sans", sans-serif; fill: #fff; }
.info { display: flex; align-items: center; justify-content: flex-end; padding-right: 18px; font-size: 11px; }
.info span { padding: 0 9px 0 6px; border-left: 1px solid #dcdfe2; }
.info .tx { padding: 0 7px 0 5px; }
.info .play { width: 10px; height: 12px; margin-right: 6px; }
.info .blank { width: 22px; height: 12px; padding: 0; border-right: 1px solid #dcdfe2; }
.tabicon { margin: 0 16px 0 10px; }
.tri { display: inline-block; margin: 0 0 2px 2px; border: 4px solid transparent; border-top: 5px solid #223; border-bottom: 0; }

/* taskbar */
.taskbar { height: 36px; display: flex; background: #22303a; color: #eef1f3; font-family: "Open Sans", "Noto Sans", sans-serif; }
.start { width: 44px; display: grid; place-items: center; }
.search { width: 323px; display: flex; align-items: center; padding-left: 11px; gap: 10px; background: #f2f2f2; color: #444; }
.search input { flex: 1; min-width: 0; font-size: 14px; outline: 0; }
.search input::placeholder { color: #484848; opacity: 1; }
.doodle { width: 72px; height: 32px; align-self: flex-end; }
.apps { display: flex; flex: 1; }
.apps button { width: 46px; display: grid; place-items: center; border-bottom: 2px solid transparent; }
.apps svg { width: 24px; height: 24px; }
.apps .active { background: #4a565e; border-bottom-color: #8bb2d2; }
.apps .open { border-bottom-color: #8aa1b2; }
.tray { display: flex; align-items: center; gap: 7px; padding-right: 21px; }
.moon { width: 24px; height: 24px; margin-right: -1px; }
.temp { font-size: 12px; margin-right: 5px; }
.clock { width: 62px; text-align: center; font-size: 12px; margin: 0 3px; white-space: nowrap; }
.tray .i16 + .i16 { margin-left: -1px; }
.note { width: 18px; height: 18px; }
```
